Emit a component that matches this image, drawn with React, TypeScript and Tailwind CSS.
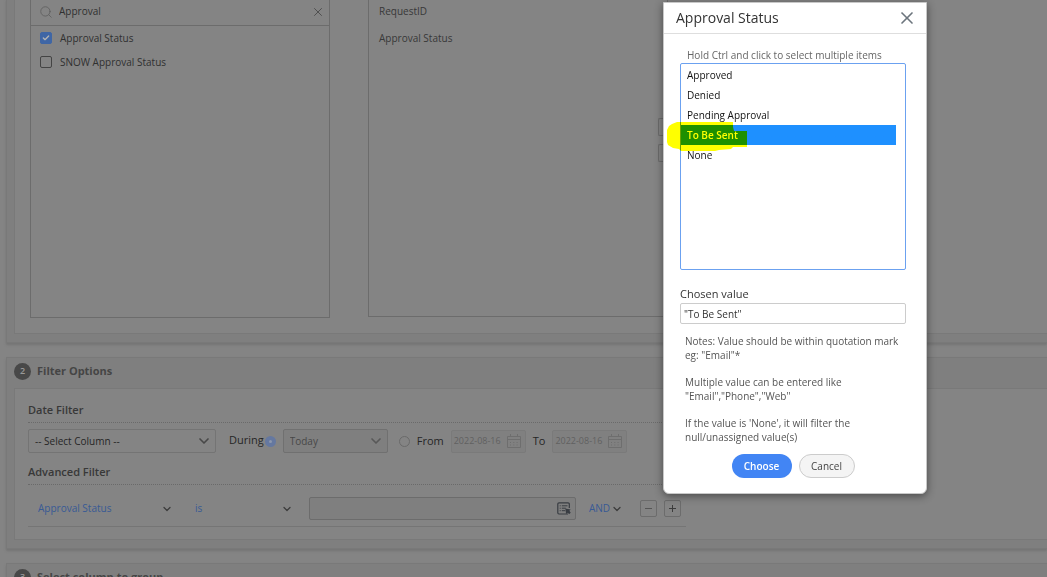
import {useState} from 'react';
import type {ReactNode} from 'react';
import {Check, ChevronDown, Search, X} from 'lucide-react';
import clsx from 'clsx';

const STATUSES = ['Approved', 'Denied', 'Pending Approval', 'To Be Sent', 'None']

const COLUMNS = [
  {label: 'Approval Status', checked: true},
  {label: 'SNOW Approval Status', checked: false},
]

function Section({step, title, children}: {step?: number, title?: string, children?: ReactNode}) {
  return (
    <section className="border border-r-0 border-[#797979] bg-[#7f7f7f] pb-2 pl-[7px] shadow-[0_2px_2px_#757575]">
      {step && (
        <div className="flex h-[30px] items-center gap-1.5 pb-1">
          <span className="flex size-[17px] items-center justify-center rounded-full bg-[#484848] text-[9px] font-semibold text-[#999]">{step}</span>
          <h2 className="text-[11px] leading-4 font-bold text-[#454545]">{title}</h2>
        </div>
      )}
      <div className="border border-r-0 border-[#797979] bg-[#848484]">{children}</div>
    </section>
  )
}

function FilterHeading({children}: {children: ReactNode}) {
  return (
    <h3 className="border-b border-dotted border-[#6a6a6a] pb-1 text-[11px] leading-4 font-semibold text-[#383838]">{children}</h3>
  )
}

function Dropdown({label, value, className, selectClass, iconClass}: {
  label: string, value: string, className?: string, selectClass?: string, iconClass?: string
}) {
  return (
    <div className={clsx('relative', className)}>
      <select aria-label={label} className={clsx('block w-full appearance-none text-[10px]', selectClass)}>
        <option>{value}</option>
      </select>
      <ChevronDown className={clsx('pointer-events-none absolute top-1/2 -translate-y-1/2', iconClass)} strokeWidth={2.5}/>
    </div>
  )
}

function CalendarIcon() {
  return (
    <svg viewBox="0 0 14 14" className="size-3.5 shrink-0" fill="none" stroke="currentColor">
      <path d="M.5 2.5h13v11H.5zM.5 5.5h13M3.5 0v3M10.5 0v3"/>
      <path d="M3 8.5h8M3 11h8" strokeDasharray="1 2.3"/>
    </svg>
  )
}

function PickListIcon() {
  return (
    <svg viewBox="0 0 14 13" className="h-[13px] w-3.5" fill="none" stroke="currentColor">
      <path d="M12.3 6V2a1.2 1.2 0 0 0-1.2-1.2H2A1.2 1.2 0 0 0 .8 2v8.8A1.2 1.2 0 0 0 2 12h9" strokeWidth="1.2"/>
      <path d="M2.7 3.8h1M4.8 3.8h5.7M2.7 6.2h1M4.8 6.2h4M2.7 8.7h1M4.8 8.7h3.4"/>
      <path d="M8.3 6.5l5.4.9-1.3 1.3 1.3 2-1.4 1.4-1.9-1.4-1.3 1.3z" fill="currentColor" stroke="none"/>
    </svg>
  )
}

function DateInput({label}: {label: string}) {
  return (
    <div className="flex h-[23px] w-[75px] items-center justify-between rounded-xs border border-[#7a7a7a] bg-[#808080] pr-1 pl-0.5 text-[#6e6e6e]">
      <input aria-label={label} defaultValue="2022-08-16" className="w-[52px] text-[9px] text-[#606060]"/>
      <CalendarIcon/>
    </div>
  )
}

function ColumnPicker() {
  return (
    <div className="flex gap-[38px] pb-[15px] pl-[15px]">
      <div className="h-[318px] w-[300px] border border-t-0 border-[#6c6c6c]">
        <div className="flex h-[26px] items-center border-b border-[#6c6c6c] pr-1 pb-0.5 pl-2">
          <Search className="size-3.5 text-[#606060]" strokeWidth={1.5}/>
          <input aria-label="Search columns" defaultValue="Approval" className="ml-1.5 min-w-0 grow text-[10px] text-[#303030]"/>
          <button aria-label="Clear search"><X className="size-3.5 text-[#484848]" strokeWidth={1.5}/></button>
        </div>
        <ul>
          {COLUMNS.map((column) => (
            <li key={column.label}>
              <label className="flex h-6 items-center gap-2 pl-[9px] text-[10px] text-[#303030]">
                <span className="relative flex">
                  <input
                    type="checkbox"
                    defaultChecked={column.checked}
                    className="peer size-3 appearance-none rounded-xs border border-[#444] checked:border-[#3f66a5] checked:bg-[#3f66a5]"
                  />
                  <Check className="pointer-events-none absolute top-0.5 left-0.5 hidden size-2 text-[#b4b4b4] peer-checked:block" strokeWidth={4}/>
                </span>
                {column.label}
              </label>
            </li>
          ))}
        </ul>
      </div>
      <div className="flex h-[317px] w-[300px] justify-between border border-t-0 border-[#6c6c6c] pl-2.5 text-[10px] text-[#383838]">
        <ul className="pt-1 leading-[15px]">
          <li className="pb-3">RequestID</li>
          <li>Approval Status</li>
        </ul>
        <div className="flex flex-col gap-2 pt-[118px]">
          <button aria-label="Move up" className="h-[18px] w-[9px] rounded-l-xs border border-r-0 border-[#6c6c6c]"/>
          <button aria-label="Move down" className="h-[18px] w-[9px] rounded-l-xs border border-r-0 border-[#6c6c6c]"/>
        </div>
      </div>
    </div>
  )
}

function FilterOptions() {
  return (
    <div className="w-[671px] pt-[13px] pb-3 pl-[13px]">
      <FilterHeading>Date Filter</FilterHeading>
      <div className="flex items-center pt-1.5 pb-[11px] text-[11px] text-[#262626]">
        <Dropdown
          label="Date column"
          value="-- Select Column --"
          className="w-[188px]"
          selectClass="h-6 rounded-xs border border-[#747474] pl-1.5 text-[#262626]"
          iconClass="right-1 size-4 text-[#484848]"
        />
        <label htmlFor="during" className="ml-[13px] pb-0.5">During</label>
        <input id="during" type="radio" name="range" defaultChecked className="ml-px size-[11px] appearance-none rounded-full border-4 border-[#6578a0] bg-[#8c97ad]"/>
        <Dropdown
          label="Period"
          value="Today"
          className="ml-[7px] w-[105px]"
          selectClass="h-6 rounded-xs border border-[#707070] bg-[#7f7f7f] pl-1.5 text-[#484848]"
          iconClass="right-1 size-4 text-[#585858]"
        />
        <input id="from" type="radio" name="range" className="ml-[11px] size-[11px] appearance-none rounded-full border border-[#6a6a6a]"/>
        <label htmlFor="from" className="mx-[7px]">From</label>
        <DateInput label="From date"/>
        <span className="mx-[7px]">To</span>
        <DateInput label="To date"/>
      </div>
      <FilterHeading>Advanced Filter</FilterHeading>
      <div className="flex items-center border-b border-[#757575] pt-3 pb-1.5 pl-2.5">
        <Dropdown label="Filter column" value="Approval Status" className="w-[135px]" selectClass="text-[#385a95]" iconClass="right-0 size-3 text-[#3c3c3c]"/>
        <Dropdown label="Condition" value="is" className="ml-[22px] w-[98px]" selectClass="text-[#385a95]" iconClass="right-0 size-3 text-[#3c3c3c]"/>
        <div className="ml-4 flex h-[23px] w-[267px] items-center rounded-xs border border-[#6c6c6c] bg-[#7f7f7f] px-1 text-[#383c42]">
          <input aria-label="Filter value" className="min-w-0 grow text-[10px]"/>
          <button aria-label="Pick values"><PickListIcon/></button>
        </div>
        <Dropdown label="Operator" value="AND" className="ml-[13px] w-[34px]" selectClass="text-[#385a95]" iconClass="right-0 size-3 text-[#3c3c3c]"/>
        <button aria-label="Remove filter" className="ml-[17px] flex size-[17px] items-center justify-center rounded-xs border border-[#6c6c6c]">
          <span className="h-px w-[7px] bg-[#555]"/>
        </button>
        <button aria-label="Add filter" className="ml-[7px] flex size-[17px] items-center justify-center rounded-xs border border-[#6c6c6c]">
          <svg viewBox="0 0 7 7" className="size-[7px]" stroke="#3c3c3c"><path d="M0 3.5h7M3.5 0v7"/></svg>
        </button>
      </div>
    </div>
  )
}

function ApprovalStatusDialog() {
  const [selected, setSelected] = useState<string[]>(['To Be Sent'])

  const chosen = selected.map((item) => `"${item}"`).join(',')

  return (
    <div role="dialog" aria-label="Approval Status" className="w-[264px] rounded-b-md border border-[#c8c8c8] bg-white shadow-[0_2px_8px_rgba(0,0,0,0.45)]">
      <header className="flex h-[31px] items-center justify-between border-b border-[#dedede] pr-[9px] pl-3">
        <h1 className="text-sm text-[#333]">Approval Status</h1>
        <button aria-label="Close"><X className="size-5 text-[#6c757d]" strokeWidth={2}/></button>
      </header>
      <div className="pt-3.5 pr-5 pb-[15px] pl-4">
        <div className="relative">
          <label htmlFor="statuses" className="block pl-[7px] text-[10px] leading-[15px] text-[#666]">Hold Ctrl and click to select multiple items</label>
          <select
            id="statuses"
            multiple
            value={selected}
            onChange={(e) => setSelected(Array.from(e.target.selectedOptions, (option) => option.value))}
            className="block h-[207px] w-full rounded-xs border border-[#6ba1f0] pt-px pr-[9px] text-[10px] text-[#111] outline-none"
          >
            {STATUSES.map((status) => (
              <option
                key={status}
                className="h-5 min-h-5 px-1.5 py-[3px] leading-[14px] checked:bg-linear-to-r checked:from-[#1e90ff] checked:to-[#1e90ff] checked:font-semibold checked:[-webkit-text-fill-color:white]"
              >
                {status}
              </option>
            ))}
          </select>
          {/* marker stroke over the selected status */}
          <svg viewBox="0 0 81 30" className="pointer-events-none absolute top-[74px] -left-[13px] h-[30px] w-[81px] mix-blend-multiply">
            <path d="M5 2 10 0H66V5L67 9H80V25H66L64 27 52 28 48 29H14L12 27 6 26 1 23 0 20V8L2 4Z" fill="#ff0"/>
          </svg>
        </div>
        <label htmlFor="chosen" className="mt-[15px] block text-[11px] leading-[18px] text-[#333]">Chosen value</label>
        <input id="chosen" value={chosen} readOnly className="block h-[21px] w-full rounded-xs border border-[#ccc] px-[3px] text-[10px] text-[#333]"/>
        <div className="mt-2.5 space-y-[13px] pl-[5px] text-[10px] leading-[14px] text-[#555]">
          <p>Notes: Value should be within quotation mark eg: "Email"*</p>
          <p>Multiple value can be entered like "Email","Phone","Web"</p>
          <p>If the value is 'None', it will filter the null/unassigned value(s)</p>
        </div>
        <div className="mt-2.5 flex justify-center gap-[7px] text-[10px]">
          <button className="h-6 w-[60px] rounded-full bg-[#4285f4] font-semibold text-white">Choose</button>
          <button className="h-6 w-14 rounded-full border border-[#ccc] bg-[#f4f4f4] text-[#444]">Cancel</button>
        </div>
      </div>
    </div>
  )
}

export default function App() {
  return (
    <div className="h-screen overflow-hidden bg-[#848484] font-[Open_Sans,sans-serif]">
      <main className="-mt-0.5 space-y-[14px] pl-1.5">
        <Section><ColumnPicker/></Section>
        <Section step={2} title="Filter Options"><FilterOptions/></Section>
        <Section step={3} title="Select column to group"/>
      </main>
      <div className="fixed inset-0 flex items-start justify-end pt-0.5 pr-[120px]">
        <ApprovalStatusDialog/>
      </div>
    </div>
  );
}
